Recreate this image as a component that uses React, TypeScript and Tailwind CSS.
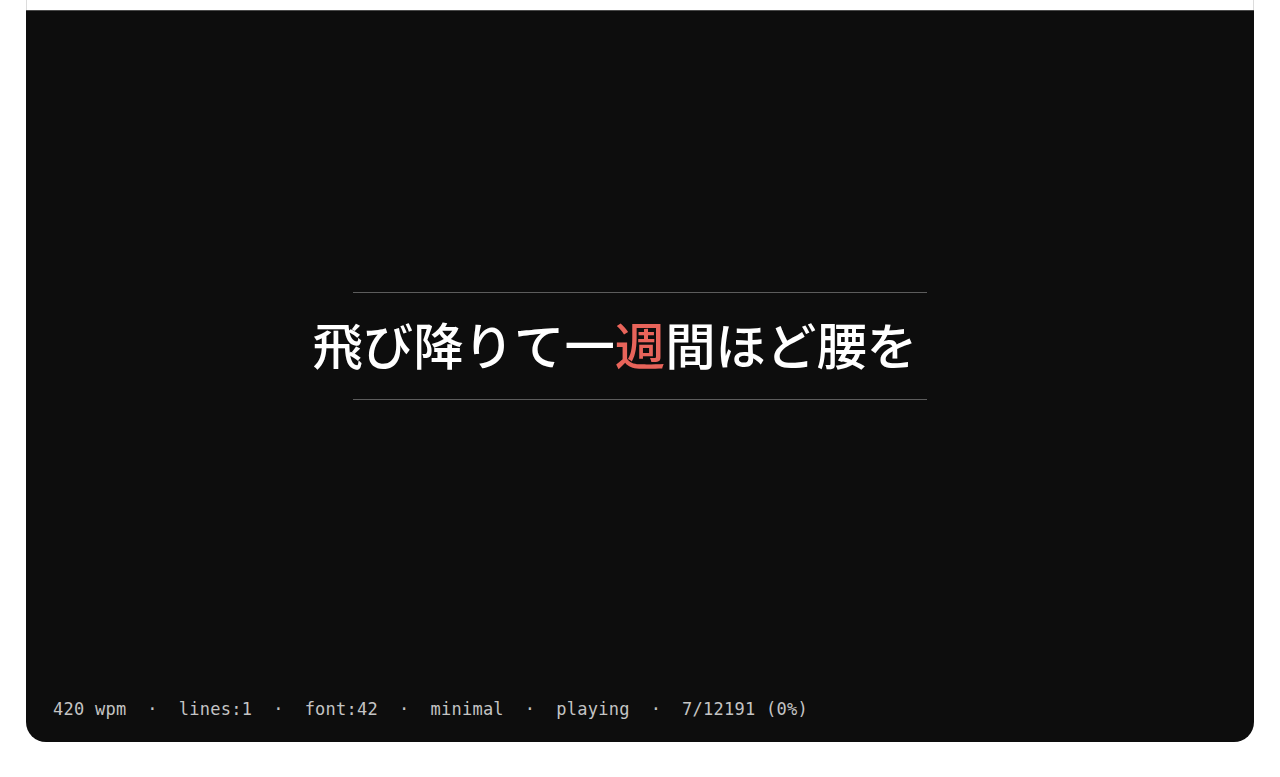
import React from "react";

const before = "飛び降りて一";
const pivot = "週";
const after = "間ほど腰を";

const stats = ["420 wpm", "lines:1", "font:42", "minimal", "playing", "7/12191 (0%)"];

export default function App() {
  return (
    <div className="min-h-[777px] bg-white px-[26px]">
      {/* frame edge above the reader */}
      <div className="h-[10px] border-x border-[#dcdcdc]" />

      <div className="flex h-[732px] flex-col rounded-b-[20px] border-t border-[#4a4a4a] bg-[#0d0d0d]">
        {/* reader */}
        <div className="flex flex-1 flex-col items-center justify-center">
          <div className="h-px w-[574px] bg-[#5c5c5c]" />
          <div
            className="grid h-[106px] w-full grid-cols-[1fr_auto_1fr] items-center pb-[3px] text-[50.4px] font-medium leading-none text-white"
            style={{ fontFamily: '"Noto Sans CJK JP", "Noto Sans", sans-serif' }}
          >
            <span className="text-right">{before}</span>
            <span className="text-[#e8645a]">{pivot}</span>
            <span className="text-left">{after}</span>
          </div>
          <div className="h-px w-[574px] bg-[#5c5c5c]" />
        </div>

        {/* status line */}
        <div
          className="whitespace-pre px-[27px] pb-[22px] pt-[18px] text-[17px] leading-[22px] tracking-[0.25px] text-[#c4c4c4]"
          style={{ fontFamily: '"DejaVu Sans Mono", "Liberation Mono", monospace' }}
        >
          {stats.join("  ·  ")}
        </div>
      </div>
    </div>
  );
}
